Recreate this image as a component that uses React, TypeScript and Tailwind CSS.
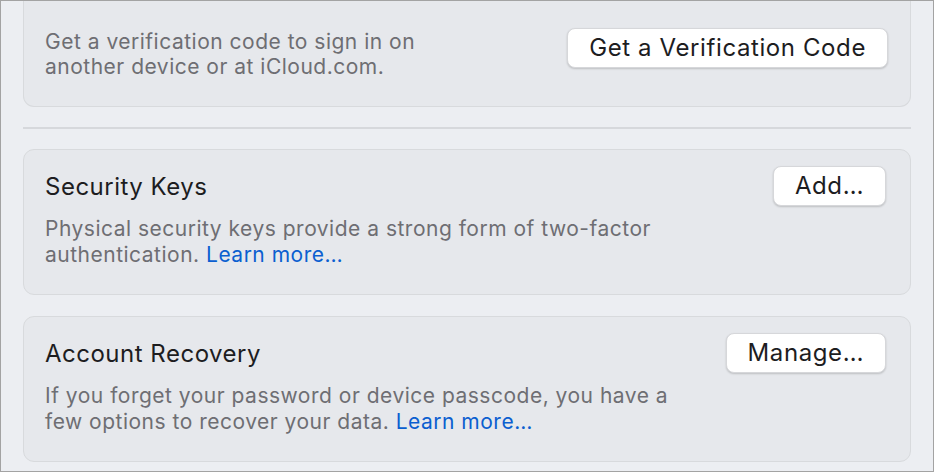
const sections = [
  {
    title: "Security Keys",
    button: "Add…",
    text: "Physical security keys provide a strong form of two-factor authentication.",
  },
  {
    title: "Account Recovery",
    button: "Manage…",
    text: "If you forget your password or device passcode, you have a few options to recover your data.",
  },
]

function MacButton({ label }: { label: string }) {
  return (
    <button className="h-[40px] shrink-0 rounded-[8px] border border-[#d6d7da] bg-white px-[21px] text-[24px] leading-none tracking-[0.6px] text-[#1d1d1f] shadow-[0_1px_2px_rgba(0,0,0,0.18)]">
      {label}
    </button>
  )
}

export default function App() {
  return (
    <div
      className="h-[472px] w-[934px] overflow-hidden border border-[#a3a3a3] bg-[#eceef2]"
      style={{ fontFamily: "Inter, 'Noto Sans', sans-serif" }}
    >
      <div className="flex flex-col px-[22px]">
        <div className="-mt-[20px] flex items-start justify-between rounded-b-[11px] border border-t-0 border-[#d8dadd] bg-[#e6e8ec] pb-[27px] pl-[21px] pr-[22px] pt-[47px]">
          <p className="mt-[1px] text-[21px] leading-[25px] tracking-[0.5px] text-[#6e6e73]">
            Get a verification code to sign in on
            <br />
            another device or at iCloud.com.
          </p>
          <MacButton label="Get a Verification Code" />
        </div>

        <div className="my-[20px] h-[2px] bg-[#d6d8dc]" />

        <div className="flex flex-col gap-[21px]">
          {sections.map((s) => (
            <div
              key={s.title}
              className="rounded-[11px] border border-[#d8dadd] bg-[#e6e8ec] pb-[26px] pl-[21px] pr-[24px] pt-[16px]"
            >
              <div className="flex h-[40px] items-center justify-between">
                <h3 className="mt-[1px] text-[24px] tracking-[0.5px] text-[#1d1d1f]">{s.title}</h3>
                <MacButton label={s.button} />
              </div>
              <p className="mt-[10px] w-[640px] text-[21px] leading-[26px] tracking-[0.5px] text-[#6e6e73]">
                {s.text} <span className="text-[#0b5fd0]">Learn more…</span>
              </p>
            </div>
          ))}
        </div>
      </div>
    </div>
  )
}
